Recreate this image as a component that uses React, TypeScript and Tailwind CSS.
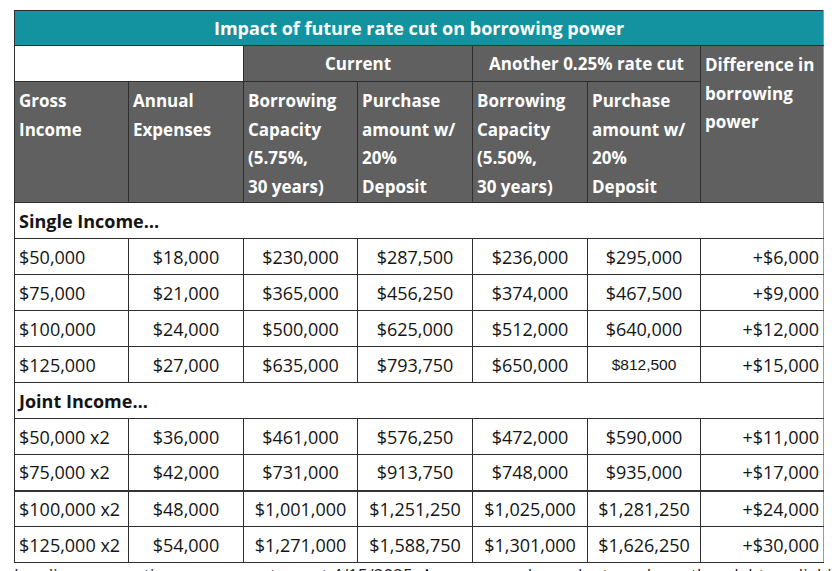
const single = [
  ['$50,000', '$18,000', '$230,000', '$287,500', '$236,000', '$295,000', '+$6,000'],
  ['$75,000', '$21,000', '$365,000', '$456,250', '$374,000', '$467,500', '+$9,000'],
  ['$100,000', '$24,000', '$500,000', '$625,000', '$512,000', '$640,000', '+$12,000'],
  ['$125,000', '$27,000', '$635,000', '$793,750', '$650,000', '$812,500', '+$15,000'],
];

const joint = [
  ['$50,000 x2', '$36,000', '$461,000', '$576,250', '$472,000', '$590,000', '+$11,000'],
  ['$75,000 x2', '$42,000', '$731,000', '$913,750', '$748,000', '$935,000', '+$17,000'],
  ['$100,000 x2', '$48,000', '$1,001,000', '$1,251,250', '$1,025,000', '$1,281,250', '+$24,000'],
  ['$125,000 x2', '$54,000', '$1,271,000', '$1,588,750', '$1,301,000', '$1,626,250', '+$30,000'],
];

const head = 'border border-[#2e2e2e] bg-[#606060] text-white font-bold align-top text-left px-[4px] pt-[5px] text-[17px] leading-[28.5px] whitespace-nowrap';

function Lines({ lines }: { lines: string[] }) {
  return (
    <>
      {lines.map((l, i) => (
        <span key={i} className="block">
          {l}
        </span>
      ))}
    </>
  );
}

function DataRows({ rows, thickAfter }: { rows: string[][]; thickAfter?: number }) {
  return (
    <>
      {rows.map((r, i) => (
        <tr key={r[0]} className={i === thickAfter ? 'h-[36px] border-b-2 border-b-[#333]' : 'h-[36px]'}>
          {r.map((cell, j) => {
            const odd = cell === '$812,500';
            const align = j === 0 ? 'text-left pl-[4px]' : j === 6 ? 'text-right pr-[4px]' : 'text-center';
            return (
              <td
                key={j}
                className={`border border-[#2e2e2e] ${align} ${
                  odd ? "font-['Liberation_Sans',sans-serif] text-[15.5px]" : 'text-[18px]'
                } ${j === 6 ? 'border-r-[#9a9a9a]' : ''} text-[#141414] leading-none`}
              >
                {cell}
              </td>
            );
          })}
        </tr>
      ))}
    </>
  );
}

export default function App() {
  return (
    <div className="w-[832px] h-[571px] overflow-hidden bg-white font-['Open_Sans',sans-serif]">
      <div className="pt-[10px] pl-[14px]">
        <table className="table-fixed border-collapse w-[809px]">
          <colgroup>
            <col className="w-[114px]" />
            <col className="w-[115px]" />
            <col className="w-[114px]" />
            <col className="w-[115px]" />
            <col className="w-[115px]" />
            <col className="w-[113px]" />
            <col className="w-[123px]" />
          </colgroup>
          <tbody>
            <tr className="h-[35px]">
              <td
                colSpan={7}
                className="border border-[#2e2e2e] border-r-[#9a9a9a] bg-[#13939f] text-white font-bold text-[18px] text-center leading-none"
              >
                Impact of future rate cut on borrowing power
              </td>
            </tr>
            <tr className="h-[36px]">
              <td colSpan={2} className="border border-[#2e2e2e] bg-white" />
              <td colSpan={2} className="border border-[#2e2e2e] bg-[#606060] text-white font-bold text-[17px] text-center leading-none">
                Current
              </td>
              <td colSpan={2} className="border border-[#2e2e2e] bg-[#606060] text-white font-bold text-[17px] text-center leading-none">
                Another 0.25% rate cut
              </td>
              <td rowSpan={2} className={`${head} border-r-[#9a9a9a] pt-[2px]`}>
                <Lines lines={['Difference in', 'borrowing', 'power']} />
              </td>
            </tr>
            <tr className="h-[121px]">
              <td className={head}>
                <Lines lines={['Gross', 'Income']} />
              </td>
              <td className={head}>
                <Lines lines={['Annual', 'Expenses']} />
              </td>
              <td className={head}>
                <Lines lines={['Borrowing', 'Capacity', '(5.75%,', '30 years)']} />
              </td>
              <td className={head}>
                <Lines lines={['Purchase', 'amount w/', '20%', 'Deposit']} />
              </td>
              <td className={head}>
                <Lines lines={['Borrowing', 'Capacity', '(5.50%,', '30 years)']} />
              </td>
              <td className={head}>
                <Lines lines={['Purchase', 'amount w/', '20%', 'Deposit']} />
              </td>
            </tr>
            <tr className="h-[36px]">
              <td colSpan={7} className="border border-[#2e2e2e] border-r-[#9a9a9a] pl-[4px] font-bold text-[18px] text-[#141414] leading-none">
                Single Income…
              </td>
            </tr>
            <DataRows rows={single} />
            <tr className="h-[36px]">
              <td colSpan={7} className="border border-[#2e2e2e] border-r-[#9a9a9a] pl-[4px] font-bold text-[18px] text-[#141414] leading-none">
                Joint Income…
              </td>
            </tr>
            <DataRows rows={joint} thickAfter={1} />
          </tbody>
        </table>
        <p className="mt-[3px] text-[17px] leading-none text-[#222] whitespace-nowrap">
          Lending assumptions are accurate as at 4/15/2025. Assumes no dependants and no other debts or liabilities.
        </p>
      </div>
    </div>
  );
}
